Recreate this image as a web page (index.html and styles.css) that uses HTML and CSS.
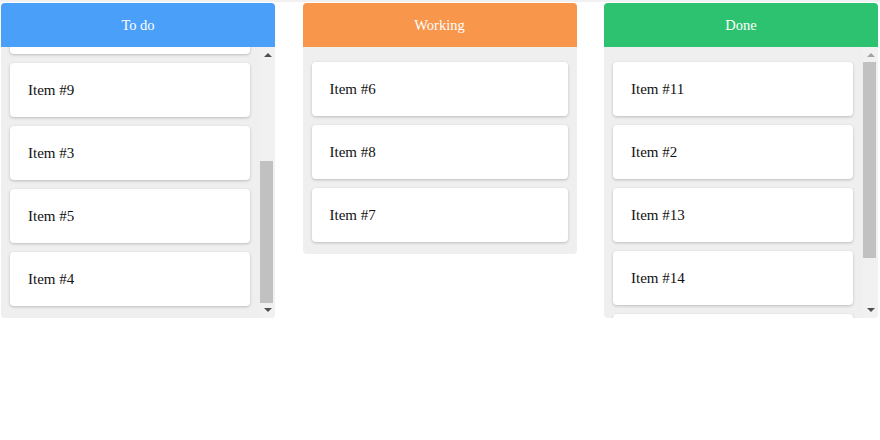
FILE: index.html
```html
<!DOCTYPE html>
<html>
<head>
<meta charset="utf-8">
<link rel="stylesheet" href="styles.css">
</head>
<body>
<div class="topbar"></div>
<div class="board">
  <section class="column todo">
    <header class="col-head">To do</header>
    <div class="list-wrap">
      <div class="list has-bar" id="todo-list">
        <div class="card">Item #1</div>
        <div class="card">Item #10</div>
        <div class="card">Item #12</div>
        <div class="card">Item #9</div>
        <div class="card">Item #3</div>
        <div class="card">Item #5</div>
        <div class="card">Item #4</div>
      </div>
      <div class="scrollbar">
        <div class="sb-btn"><span class="arrow up"></span></div>
        <div class="sb-track"><div class="sb-thumb"></div></div>
        <div class="sb-btn"><span class="arrow down"></span></div>
      </div>
    </div>
  </section>
  <section class="column working">
    <header class="col-head">Working</header>
    <div class="list">
      <div class="card">Item #6</div>
      <div class="card">Item #8</div>
      <div class="card">Item #7</div>
    </div>
  </section>
  <section class="column done">
    <header class="col-head">Done</header>
    <div class="list-wrap">
      <div class="list has-bar">
        <div class="card">Item #11</div>
        <div class="card">Item #2</div>
        <div class="card">Item #13</div>
        <div class="card">Item #14</div>
        <div class="card">Item #15</div>
      </div>
      <div class="scrollbar">
        <div class="sb-btn"><span class="arrow up disabled"></span></div>
        <div class="sb-track"><div class="sb-thumb"></div></div>
        <div class="sb-btn"><span class="arrow down"></span></div>
      </div>
    </div>
  </section>
</div>
<script src="script.js"></script>
</body>
</html>
```
FILE: styles.css
```css
html, body {
  margin: 0;
  padding: 0;
  background: #ffffff;
  font-family: "Liberation Serif", "Times New Roman", serif;
  color: #111;
}
.topbar {
  height: 2px;
  background: #f1f1f1;
}
.board {
  display: flex;
  align-items: flex-start;
  gap: 27.5px;
  padding: 1px 2px 0 1px;
}
.column {
  flex: 1 1 0;
  min-width: 0;
  background: #efefef;
  border-radius: 4px;
  overflow: hidden;
}
.col-head {
  height: 44px;
  display: flex;
  align-items: center;
  justify-content: center;
  color: #ffffff;
  font-size: 14.5px;
}
.todo .col-head { background: #4a9ff9; }
.working .col-head { background: #f8964c; }
.done .col-head { background: #2dc26f; }
.list-wrap {
  display: flex;
  height: 271px;
}
.list {
  box-sizing: border-box;
  padding: 15px 9px 3px 9px;
}
.list.has-bar {
  flex: 1 1 auto;
  min-width: 0;
  overflow-y: auto;
  scrollbar-width: none;
  padding-right: 10px;
}
.list.has-bar::-webkit-scrollbar { display: none; }
.scrollbar {
  flex: 0 0 15px;
  display: flex;
  flex-direction: column;
  background: #f1f1f1;
}
.sb-btn {
  flex: 0 0 15px;
  display: flex;
  align-items: center;
  justify-content: center;
}
.sb-track {
  flex: 1 1 auto;
  display: flex;
  flex-direction: column;
}
.sb-thumb {
  background: #c1c1c1;
  margin: 0 2px 0 0;
}
.arrow {
  width: 0;
  height: 0;
  border-left: 4px solid transparent;
  border-right: 4px solid transparent;
}
.arrow.up { border-bottom: 4px solid #505050; margin-top: 1px; }
.arrow.down { border-top: 4px solid #505050; margin-bottom: 1px; }
.arrow.up.disabled { border-bottom-color: #a3a3a3; }
.card {
  background: #ffffff;
  border-radius: 4px;
  box-shadow: 0 1px 3px rgba(0, 0, 0, 0.22);
  padding: 18px 18px;
  line-height: 18px;
  font-size: 15px;
  margin-bottom: 9px;
}
```
FILE: script.js
```js
var todo = document.getElementById('todo-list');
todo.scrollTop = todo.scrollHeight;
document.querySelectorAll('.list-wrap').forEach(function (wrap) {
  var list = wrap.querySelector('.list');
  var track = wrap.querySelector('.sb-track');
  var thumb = wrap.querySelector('.sb-thumb');
  var th = track.clientHeight;
  var ratio = list.clientHeight / list.scrollHeight;
  thumb.style.height = Math.round(th * ratio) + 'px';
  thumb.style.marginTop = Math.round(th * list.scrollTop / list.scrollHeight) + 'px';
});
```
